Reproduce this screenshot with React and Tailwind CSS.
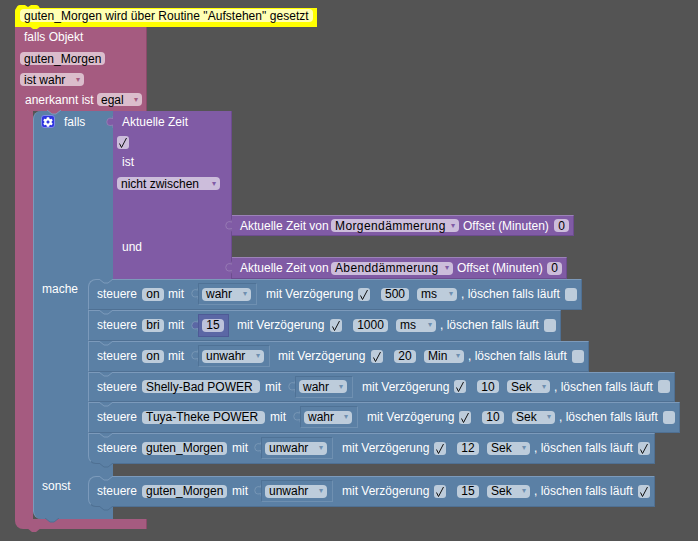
import React from "react";
import { FaCog } from "react-icons/fa";

function Tab({ fill, stroke, className }) {
  return (
    <svg viewBox="-1 0 9 15" className={"absolute " + className} aria-hidden="true">
      <path d="M8 0 V3 L4 2.5 Q0 3 0 7.5 Q0 12 4 12 L8 11.5 V15" fill={fill} stroke={stroke} strokeWidth="1" />
    </svg>
  );
}

function Notch({ fill, stroke, className }) {
  return (
    <svg viewBox="0 0 14 5" className={"absolute w-[14px] h-[5px] " + className} aria-hidden="true">
      <path d="M0 0 L5 4 H9 L14 0" fill={fill} stroke={stroke} strokeWidth="1" />
    </svg>
  );
}

function Field({ className = "", children, arrow, arrowColor = "text-[#6f8fb0]" }) {
  return (
    <span className={"flex h-[13px] shrink-0 items-center justify-between rounded-[4px] px-[4px] whitespace-nowrap text-black " + className}>
      <span>{children}</span>
      {arrow && <span className={"text-[8px] leading-none font-['DejaVu_Sans'] " + arrowColor}>▾</span>}
    </span>
  );
}

function Check({ className = "", on, bg = "bg-[#bdccdb]" }) {
  return (
    <span className={"flex h-[13px] w-[12px] shrink-0 items-center justify-center rounded-[3px] " + bg + " " + className}>
      {on && (
        <svg viewBox="0 0 12 13" className="h-[13px] w-[12px]" aria-hidden="true">
          <path d="M2.5 7.5 L4.5 11.5 L9.5 2" fill="none" stroke="#111" strokeWidth="1" />
        </svg>
      )}
    </span>
  );
}

function Lab({ className = "", children }) {
  return <span className={"shrink-0 whitespace-nowrap text-white " + className}>{children}</span>;
}

function Shadow({ className = "", fieldClass = "", val }) {
  return (
    <span className={"relative flex h-[22px] shrink-0 items-center border border-t-[#4f7296] border-l-[#4f7296] border-r-[#6f90b1] border-b-[#6f90b1] bg-[#5b80a5] pl-[3px] " + className}>
      <Tab fill="#5b80a5" stroke="#7f9cb9" className="-left-[8px] top-[3px] h-[13px] w-[7px]" />
      <Field arrow className={"bg-[#bdccdb] " + fieldClass}>{val}</Field>
    </span>
  );
}

function Row({ className = "h-[31px]", bump, children }) {
  return (
    <div className={"relative flex w-fit items-center border-t border-r border-b border-l border-t-[#7c9abb] border-l-[#7c9abb] border-r-[#4f7093] border-b-[#4f7093] bg-[#5b80a5] pb-[1px] pl-[8px] " + className}>
      <Notch fill="#5b80a5" stroke="#7c9abb" className="left-[10px] -top-[1px]" />
      {children}
      {bump && <Notch fill="#5b80a5" stroke="#4f7093" className="left-[10px] -bottom-[5px] z-10" />}
    </div>
  );
}

function Tail({ valW, val, unitW, unit, last, gap1 = "ml-[4px]" }) {
  return (
    <>
      <Check on className={gap1} />
      <Field className={"ml-[11px] justify-center bg-[#bdccdb] " + valW}>{val}</Field>
      <Field arrow className={"ml-[8px] bg-[#bdccdb] " + unitW}>{unit}</Field>
      <Lab className="ml-[4px] w-[100px]">, löschen falls läuft</Lab>
      <Check on={last} className="ml-[4px] mr-[4px]" />
    </>
  );
}

export default function App() {
  return (
    <div className="h-[541px] w-[698px] overflow-hidden bg-[#545454] pl-[15px] font-['Liberation_Sans',Arial,sans-serif] text-[12px] leading-none">
      {/* comment */}
      <div className="relative z-20 mt-[8px] flex h-[19px] w-[302px] items-start rounded-tl-[3px] bg-[#ffff00] pl-[5px] pt-[1px]">
        <svg viewBox="0 0 24 4" className="absolute -top-[3px] left-[1px] h-[4px] w-[24px]" aria-hidden="true">
          <path d="M0 4 Q1 0 4 0 H9 L12 2 L15 0 H20 Q23 0 24 4 Z" fill="#ffff00" />
        </svg>
        <svg viewBox="0 0 12 3" className="absolute -bottom-[2px] left-[14px] h-[3px] w-[12px]" aria-hidden="true">
          <path d="M0 0 L4 3 H8 L12 0 Z" fill="#ffff00" />
        </svg>
        <span className="flex h-[13px] w-[293px] items-center rounded-[4px] bg-[#ffffb3] pl-[4px] tracking-[0.04px] whitespace-nowrap text-black">
          guten_Morgen wird über Routine "Aufstehen" gesetzt
        </span>
      </div>

      {/* pink block */}
      <div className="flex w-fit flex-col">
        <div className="flex h-[84px] w-[132px] flex-col items-start border-r border-r-[#8a4a6a] bg-[#a55b80]">
          <Lab className="ml-[9px] mt-[4px] h-[12px]">falls Objekt</Lab>
          <Field className="ml-[5px] mt-[9px] w-[85px] bg-[#dbbdcc]">guten_Morgen</Field>
          <Field arrow arrowColor="text-[#a55b80]" className="ml-[5px] mt-[8px] w-[64px] bg-[#dbbdcc]">ist wahr</Field>
          <div className="ml-[10px] mt-[7px] flex items-center">
            <Lab className="w-[68px]">anerkannt ist</Lab>
            <Field arrow arrowColor="text-[#a55b80]" className="ml-[4px] w-[45px] bg-[#dbbdcc]">egal</Field>
          </div>
        </div>

        <div className="flex">
          <div className="w-[18px] bg-[#a55b80]" />

          {/* blue if block */}
          <div className="relative w-[80px] rounded-tl-[8px] rounded-bl-[8px] border-l border-l-[#7c9abb] bg-[#5b80a5]">
            <Notch fill="#a55b80" stroke="#7c9abb" className="left-[13px] -top-[1px]" />
            <Notch fill="#5b80a5" stroke="#4f7093" className="left-[11px] -bottom-[4px] z-10" />

            <div className="flex h-[168px] w-max">
              <div className="flex h-[20px] w-[79px] items-start pl-[7px] pt-[4px]">
                <span className="flex h-[13px] w-[14px] items-center justify-center rounded-[3px] border border-[#7f88e8] bg-[#2f35e0]">
                  <FaCog className="h-[10px] w-[10px] text-white" />
                </span>
                <Lab className="ml-[9px] mt-[1px]">falls</Lab>
              </div>

              {/* purple */}
              <div className="relative h-[168px] w-[119px] border-r border-r-[#6d4c8f] bg-[#805ba5]">
                <Tab fill="#805ba5" stroke="#9c82b8" className="-left-[7px] top-[5px] h-[12px] w-[7px]" />
                <div className="flex h-[21px] items-center pl-[9px]"><Lab>Aktuelle Zeit</Lab></div>
                <Check on bg="bg-[#ccbddb]" className="ml-[4px] mt-[4px]" />
                <div className="mt-[4px] flex h-[18px] items-center pl-[9px]"><Lab>ist</Lab></div>
                <Field arrow arrowColor="text-[#805ba5]" className="ml-[4px] mt-[6px] w-[103px] bg-[#ccbddb]">nicht zwischen</Field>

                <div className="relative ml-[119px] mt-[25px] flex h-[21px] w-max items-center border-t border-r border-b border-t-[#9c82b8] border-r-[#6d4c8f] border-b-[#6d4c8f] bg-[#805ba5] pl-[8px]">
                  <Tab fill="#805ba5" stroke="#9c82b8" className="-left-[7px] top-[3px] h-[13px] w-[7px]" />
                  <Lab className="w-[87px]">Aktuelle Zeit von</Lab>
                  <Field arrow arrowColor="text-[#805ba5]" className="ml-[4px] w-[128px] bg-[#ccbddb]"><span className="tracking-[0.4px]">Morgendämmerung</span></Field>
                  <Lab className="ml-[4px] w-[87px]">Offset (Minuten)</Lab>
                  <Field className="ml-[4px] mr-[4px] w-[15px] justify-center !px-0 bg-[#ccbddb]">0</Field>
                </div>
                <div className="flex h-[21px] items-center pl-[9px]"><Lab>und</Lab></div>
                <div className="relative ml-[119px] flex h-[22px] w-max items-center border-t border-r border-b border-t-[#9c82b8] border-r-[#6d4c8f] border-b-[#6d4c8f] bg-[#805ba5] pl-[8px]">
                  <Tab fill="#805ba5" stroke="#9c82b8" className="-left-[7px] top-[3px] h-[13px] w-[7px]" />
                  <Lab className="w-[87px]">Aktuelle Zeit von</Lab>
                  <Field arrow arrowColor="text-[#805ba5]" className="ml-[4px] w-[122px] bg-[#ccbddb]"><span className="tracking-[0.35px]">Abenddämmerung</span></Field>
                  <Lab className="ml-[4px] w-[86px]">Offset (Minuten)</Lab>
                  <Field className="ml-[4px] mr-[4px] w-[15px] justify-center !px-0 bg-[#ccbddb]">0</Field>
                </div>
              </div>
            </div>

            {/* mache */}
            <div className="flex w-max">
              <div className="w-[54px] pl-[8px] pt-[4px]"><Lab>mache</Lab></div>
              <div className="flex flex-col">
                <Row className="h-[31px] rounded-tl-[8px]">
                  <Lab className="w-[40px]">steuere</Lab>
                  <Field className="ml-[5px] w-[22px] justify-center bg-[#bdccdb]">on</Field>
                  <Lab className="ml-[4px] w-[16px]">mit</Lab>
                  <Shadow val="wahr" className="ml-[14px] w-[59px]" fieldClass="w-[49px]" />
                  <Lab className="ml-[9px] w-[88px]">mit Verzögerung</Lab>
                  <Tail valW="w-[28px]" val="500" unitW="w-[40px]" unit="ms" />
                </Row>
                <Row>
                  <Lab className="w-[40px]">steuere</Lab>
                  <Field className="ml-[5px] w-[22px] justify-center bg-[#bdccdb]">bri</Field>
                  <Lab className="ml-[4px] w-[16px]">mit</Lab>
                  <span className="relative ml-[14px] flex h-[23px] w-[31px] shrink-0 items-center border border-[#4e5a96] bg-[#5b67a5] pl-[3px]">
                    <Tab fill="#5b67a5" stroke="#7f9cb9" className="-left-[8px] top-[4px] h-[13px] w-[7px]" />
                    <Field className="w-[22px] justify-center bg-[#bdc2db]">15</Field>
                  </span>
                  <Lab className="ml-[8px] w-[88px]">mit Verzögerung</Lab>
                  <Tail gap1="ml-[5px]" valW="w-[35px]" val="1000" unitW="w-[40px]" unit="ms" />
                </Row>
                <Row>
                  <Lab className="w-[40px]">steuere</Lab>
                  <Field className="ml-[5px] w-[22px] justify-center bg-[#bdccdb]">on</Field>
                  <Lab className="ml-[4px] w-[16px]">mit</Lab>
                  <Shadow val="unwahr" className="ml-[14px] w-[72px]" fieldClass="w-[62px]" />
                  <Lab className="ml-[8px] w-[89px]">mit Verzögerung</Lab>
                  <Tail valW="w-[22px]" val="20" unitW="w-[40px]" unit="Min" />
                </Row>
                <Row className="h-[30px]">
                  <Lab className="w-[40px]">steuere</Lab>
                  <Field className="ml-[5px] w-[118px] bg-[#bdccdb]">Shelly-Bad POWER</Field>
                  <Lab className="ml-[5px] w-[16px]">mit</Lab>
                  <Shadow val="wahr" className="ml-[14px] w-[58px]" fieldClass="w-[48px]" />
                  <Lab className="ml-[9px] w-[88px]">mit Verzögerung</Lab>
                  <Tail valW="w-[22px]" val="10" unitW="w-[43px]" unit="Sek" />
                </Row>
                <Row>
                  <Lab className="w-[40px]">steuere</Lab>
                  <Field className="ml-[5px] w-[123px] bg-[#bdccdb]">Tuya-Theke POWER</Field>
                  <Lab className="ml-[5px] w-[16px]">mit</Lab>
                  <Shadow val="wahr" className="ml-[14px] w-[58px]" fieldClass="w-[48px]" />
                  <Lab className="ml-[9px] w-[88px]">mit Verzögerung</Lab>
                  <Tail valW="w-[22px]" val="10" unitW="w-[43px]" unit="Sek" />
                </Row>
                <Row bump className="h-[31px] rounded-bl-[8px]">
                  <Lab className="w-[40px]">steuere</Lab>
                  <Field className="ml-[5px] w-[85px] bg-[#bdccdb]">guten_Morgen</Field>
                  <Lab className="ml-[5px] w-[16px]">mit</Lab>
                  <Shadow val="unwahr" className="ml-[13px] w-[72px]" fieldClass="w-[62px]" />
                  <Lab className="ml-[9px] w-[88px]">mit Verzögerung</Lab>
                  <Tail valW="w-[22px]" val="12" unitW="w-[43px]" unit="Sek" last />
                </Row>
              </div>
            </div>

            {/* sonst */}
            <div className="mt-[12px] flex w-max">
              <div className="w-[54px] pl-[8px] pt-[4px]"><Lab>sonst</Lab></div>
              <Row bump className="h-[31px] rounded-tl-[8px] rounded-bl-[8px]">
                <Lab className="w-[40px]">steuere</Lab>
                <Field className="ml-[5px] w-[85px] bg-[#bdccdb]">guten_Morgen</Field>
                <Lab className="ml-[5px] w-[16px]">mit</Lab>
                <Shadow val="unwahr" className="ml-[13px] w-[72px]" fieldClass="w-[62px]" />
                <Lab className="ml-[9px] w-[88px]">mit Verzögerung</Lab>
                <Tail valW="w-[22px]" val="15" unitW="w-[43px]" unit="Sek" last />
              </Row>
            </div>
            <div className="h-[12px]" />
          </div>
        </div>

        <div className="relative h-[10px] w-[132px] rounded-bl-[8px] border-r border-r-[#8a4a6a] bg-[#a55b80]">
          <svg viewBox="0 0 14 4" className="absolute -bottom-[3px] left-[12px] h-[4px] w-[14px]" aria-hidden="true">
            <path d="M0 0 L5 4 H9 L14 0 Z" fill="#a55b80" />
          </svg>
        </div>
      </div>
    </div>
  );
}
